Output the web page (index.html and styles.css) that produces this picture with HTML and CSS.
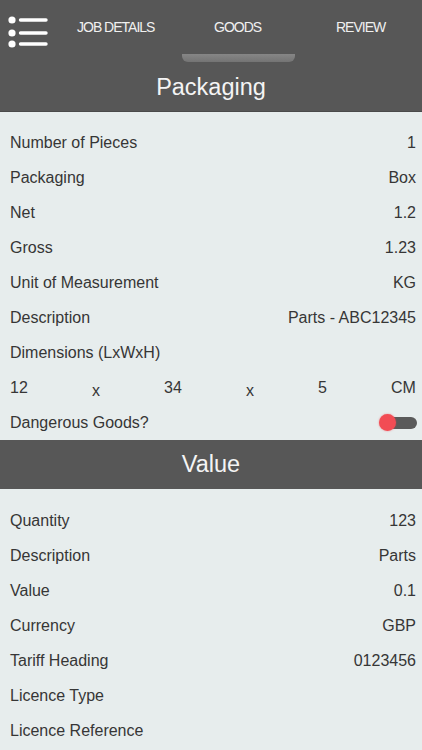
FILE: index.html
```html
<!DOCTYPE html>
<html>
<head>
<meta charset="utf-8">
<link rel="stylesheet" href="styles.css">
</head>
<body>
<header class="topbar">
  <nav class="nav">
    <svg class="menu-icon" width="40" height="36" viewBox="0 0 40 36">
      <circle cx="4" cy="4" r="3.6" fill="#fff"/>
      <circle cx="4" cy="17" r="3.6" fill="#fff"/>
      <circle cx="4" cy="28" r="3.6" fill="#fff"/>
      <line x1="12.5" y1="4" x2="38" y2="4" stroke="#fff" stroke-width="3.4" stroke-linecap="round"/>
      <line x1="12.5" y1="17" x2="38" y2="17" stroke="#fff" stroke-width="3.4" stroke-linecap="round"/>
      <line x1="12.5" y1="28" x2="38" y2="28" stroke="#fff" stroke-width="3.4" stroke-linecap="round"/>
    </svg>
    <span class="tab tab-job">JOB DETAILS</span>
    <span class="tab tab-goods">GOODS</span>
    <span class="tab tab-review">REVIEW</span>
  </nav>
  <div class="indicator-row"><div class="indicator"></div></div>
  <h1 class="section-title">Packaging</h1>
</header>

<main class="content">
  <section class="rows first">
    <div class="row"><span>Number of Pieces</span><span>1</span></div>
    <div class="row"><span>Packaging</span><span>Box</span></div>
    <div class="row"><span>Net</span><span>1.2</span></div>
    <div class="row"><span>Gross</span><span>1.23</span></div>
    <div class="row"><span>Unit of Measurement</span><span>KG</span></div>
    <div class="row"><span>Description</span><span>Parts - ABC12345</span></div>
    <div class="row"><span>Dimensions (LxWxH)</span></div>
    <div class="row dims">
      <span>12</span><span class="times">x</span><span>34</span><span class="times">x</span><span>5</span><span>CM</span>
    </div>
    <div class="row"><span>Dangerous Goods?</span>
      <span class="toggle"><span class="track"></span><span class="knob"></span></span>
    </div>
  </section>
  <h2 class="section-title band">Value</h2>
  <section class="rows second">
    <div class="row"><span>Quantity</span><span>123</span></div>
    <div class="row"><span>Description</span><span>Parts</span></div>
    <div class="row"><span>Value</span><span>0.1</span></div>
    <div class="row"><span>Currency</span><span>GBP</span></div>
    <div class="row"><span>Tariff Heading</span><span>0123456</span></div>
    <div class="row"><span>Licence Type</span></div>
    <div class="row"><span>Licence Reference</span></div>
  </section>
</main>
</body>
</html>
```

FILE: styles.css
```css
* { box-sizing: border-box; }
html, body { margin: 0; padding: 0; }
body {
  width: 422px;
  height: 750px;
  overflow: hidden;
  background: #e7eded;
  font-family: "Liberation Sans", Arial, sans-serif;
  color: #363636;
}
.topbar {
  background: #575757;
  height: 112px;
  border-bottom: 1px solid #4a4a4a;
}
.nav {
  height: 54px;
  display: flex;
  align-items: flex-start;
  position: relative;
}
.menu-icon {
  margin: 16px 0 0 8px;
  display: block;
}
.tab {
  position: absolute;
  top: 19px;
  color: #f0f0f0;
  font-size: 14px;
  letter-spacing: -1px;
  line-height: 16px;
}
.tab-job { left: 77px; }
.tab-goods { left: 214px; }
.tab-review { left: 336px; }
.indicator-row {
  height: 9px;
  display: flex;
}
.indicator {
  width: 113px;
  margin-left: 182px;
  height: 8px;
  background: linear-gradient(#868686, #747474);
  border-radius: 0 0 6px 6px;
}
.section-title {
  margin: 0;
  height: 48px;
  display: flex;
  align-items: center;
  justify-content: center;
  color: #f4f4f4;
  font-weight: normal;
  font-size: 23.5px;
}
.band {
  background: #575757;
  height: 49px;
}
.rows.first { padding-top: 13px; }
.rows.second { padding-top: 14px; }
.row {
  height: 35px;
  display: flex;
  align-items: center;
  justify-content: space-between;
  padding: 0 6px 0 10px;
  font-size: 16px;
}
.dims .times {
  padding-top: 7px;
}
.toggle {
  position: relative;
  width: 38px;
  height: 18px;
  margin-right: -1px;
}
.track {
  position: absolute;
  left: 8px;
  right: 0;
  top: 3px;
  height: 12px;
  border-radius: 6px;
  background: #5a5a5a;
}
.knob {
  position: absolute;
  left: 0;
  top: 0;
  width: 17px;
  height: 17px;
  border-radius: 50%;
  background: #f24c54;
  box-shadow: 0 0 2px rgba(240,70,80,0.6);
}
```
